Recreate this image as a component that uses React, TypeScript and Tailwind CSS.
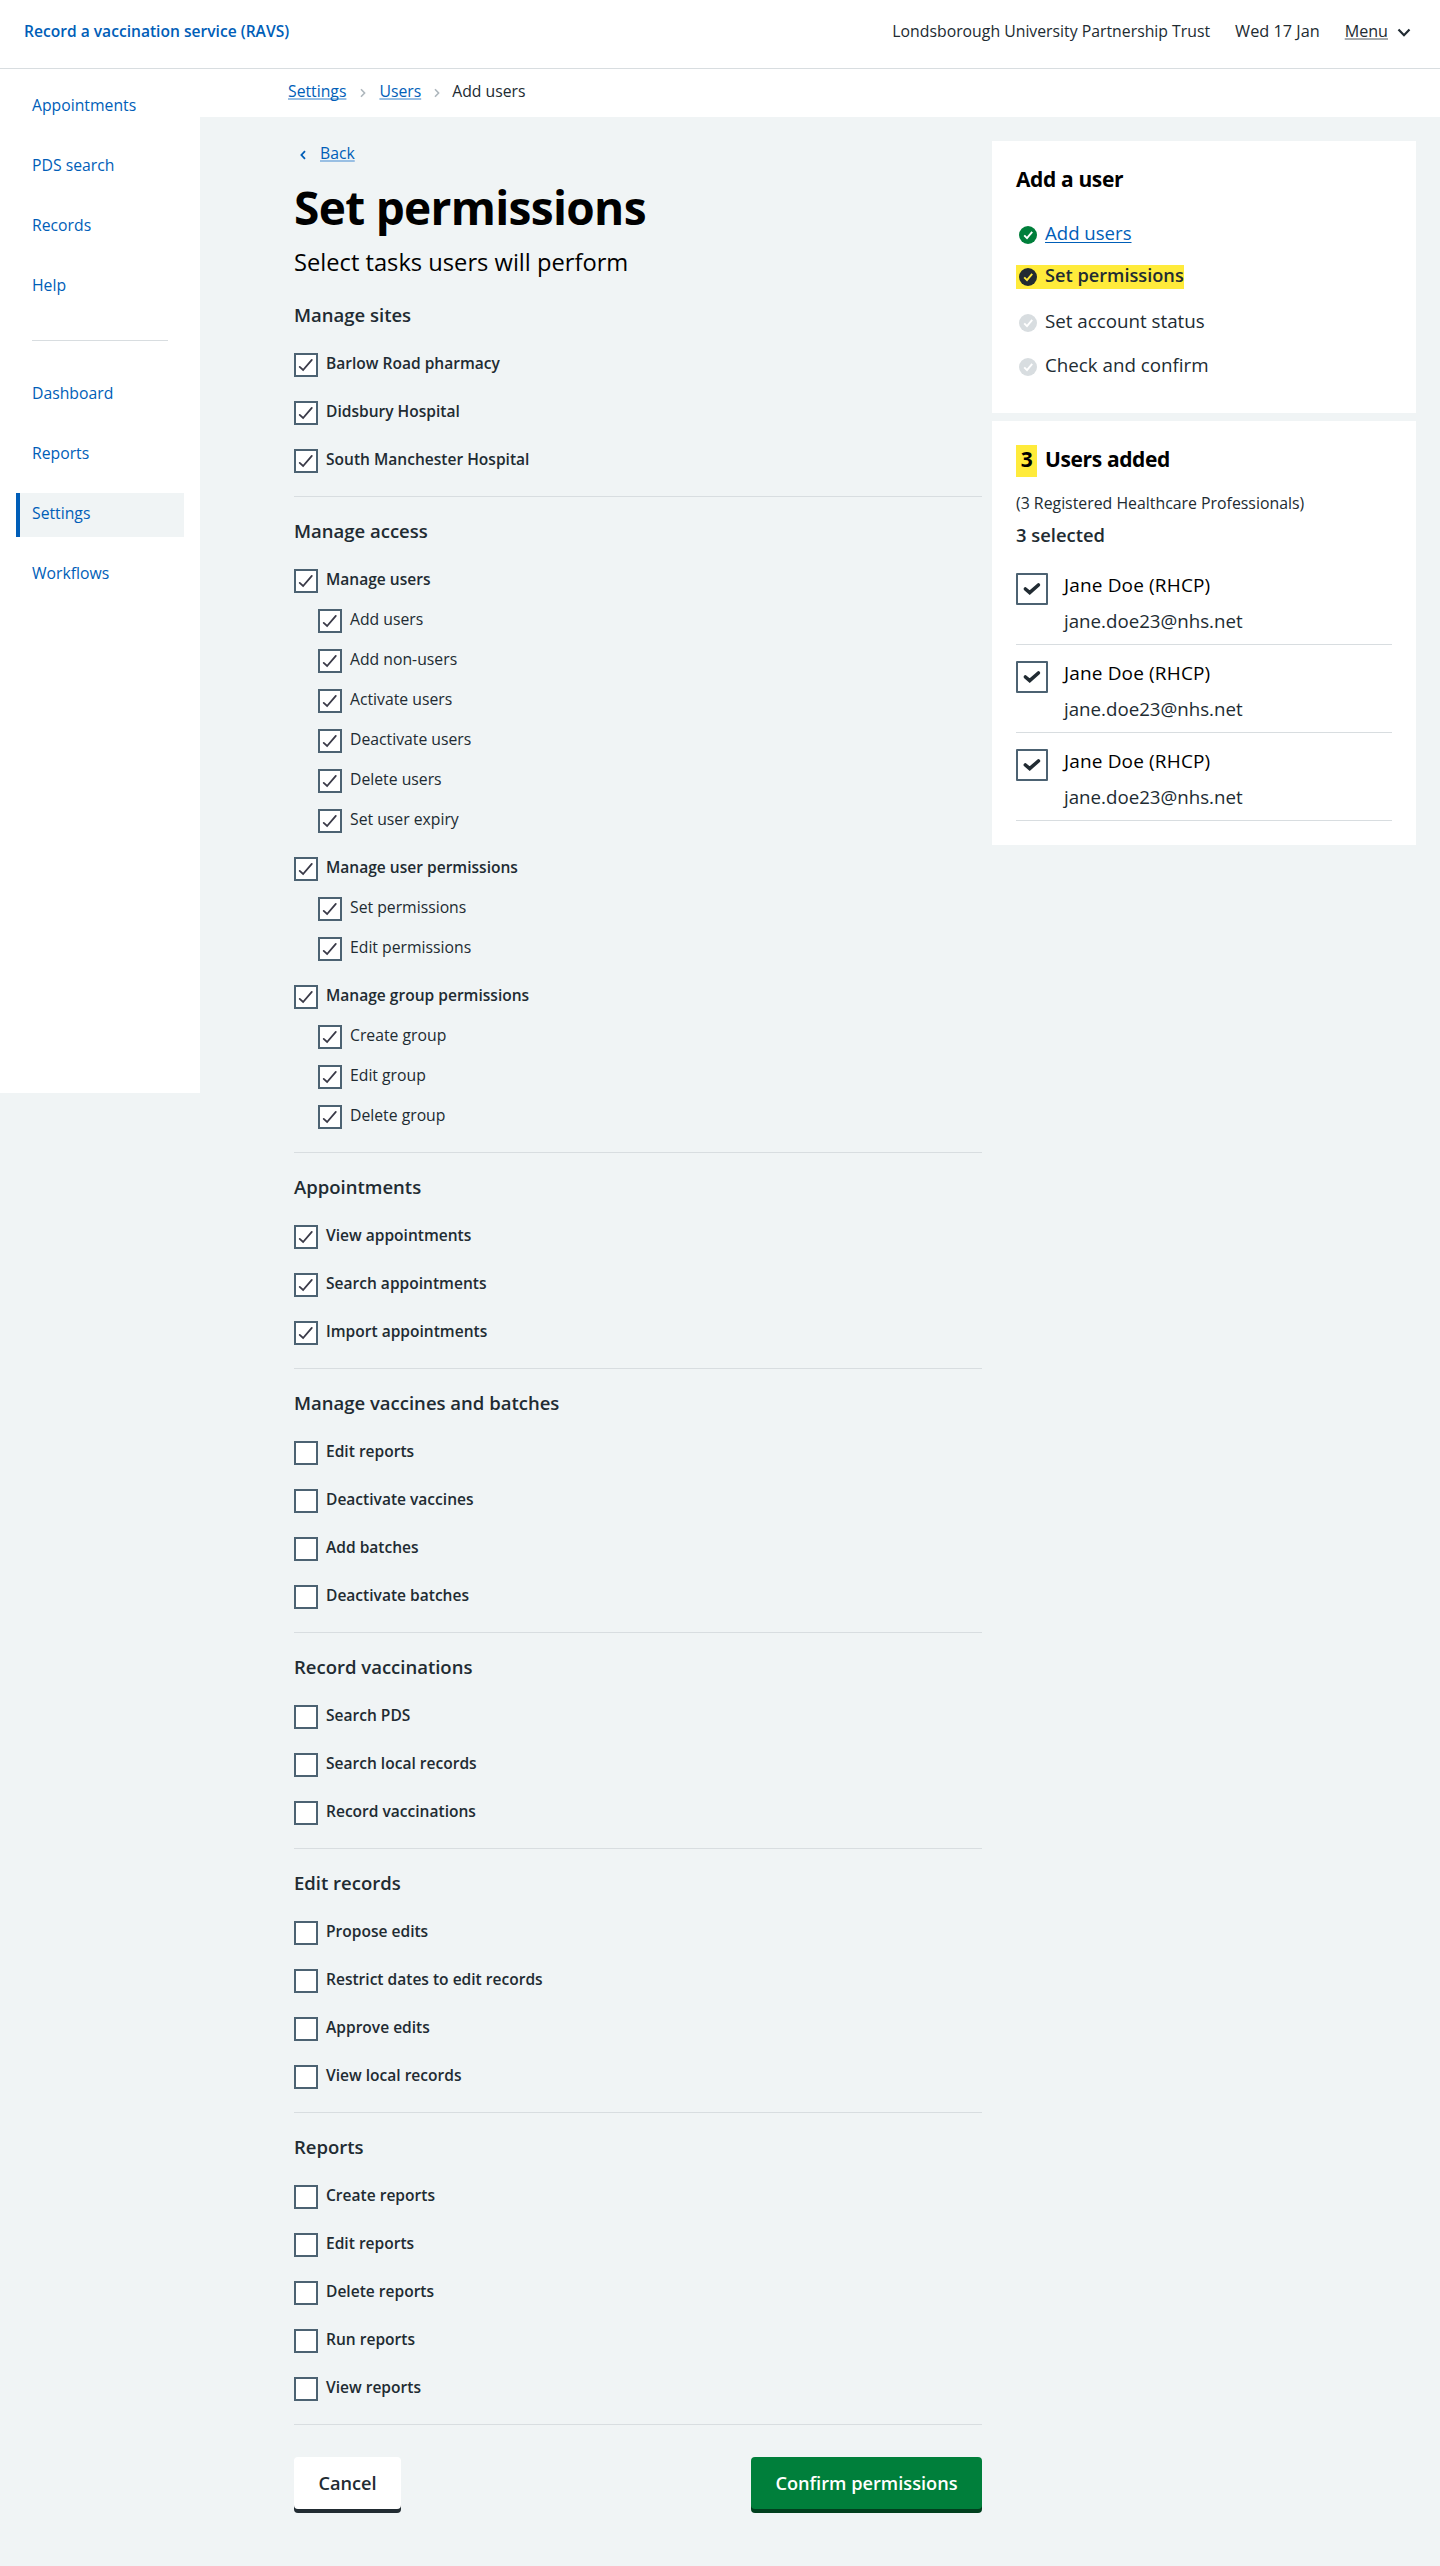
import type { ReactNode } from "react";

type Item = { label: string; children?: string[] };
type Section = { title: string; checked: boolean; items: Item[] };

const SECTIONS: Section[] = [
  {
    title: "Manage sites",
    checked: true,
    items: [{ label: "Barlow Road pharmacy" }, { label: "Didsbury Hospital" }, { label: "South Manchester Hospital" }],
  },
  {
    title: "Manage access",
    checked: true,
    items: [
      {
        label: "Manage users",
        children: ["Add users", "Add non-users", "Activate users", "Deactivate users", "Delete users", "Set user expiry"],
      },
      { label: "Manage user permissions", children: ["Set permissions", "Edit permissions"] },
      { label: "Manage group permissions", children: ["Create group", "Edit group", "Delete group"] },
    ],
  },
  {
    title: "Appointments",
    checked: true,
    items: [{ label: "View appointments" }, { label: "Search appointments" }, { label: "Import appointments" }],
  },
  {
    title: "Manage vaccines and batches",
    checked: false,
    items: [{ label: "Edit reports" }, { label: "Deactivate vaccines" }, { label: "Add batches" }, { label: "Deactivate batches" }],
  },
  {
    title: "Record vaccinations",
    checked: false,
    items: [{ label: "Search PDS" }, { label: "Search local records" }, { label: "Record vaccinations" }],
  },
  {
    title: "Edit records",
    checked: false,
    items: [
      { label: "Propose edits" },
      { label: "Restrict dates to edit records" },
      { label: "Approve edits" },
      { label: "View local records" },
    ],
  },
  {
    title: "Reports",
    checked: false,
    items: [
      { label: "Create reports" },
      { label: "Edit reports" },
      { label: "Delete reports" },
      { label: "Run reports" },
      { label: "View reports" },
    ],
  },
];

function Header() {
  return (
    <header className="flex h-[69px] justify-between border-b border-[#d8dde0] bg-white pt-[21px] pr-[29px] pl-6 text-[15.75px] leading-5">
      <a className="text-[15.6px] font-semibold text-[#005eb8]">Record a vaccination service (RAVS)</a>
      <div className="flex">
        <span className="mr-[25px] text-[15.8px]">Londsborough University Partnership Trust</span>
        <span className="mr-[25px] text-[16.3px]">Wed 17 Jan</span>
        <span className="mr-[9px] text-[16.1px] underline decoration-[#a6abae] decoration-2 underline-offset-1 [text-decoration-skip-ink:none]">
          Menu
        </span>
        <svg className="mt-[7px] h-[10px] w-[14px]" viewBox="0 0 14 10" fill="none" stroke="#212b32" strokeWidth="2.2">
          <path d="M1.5 1.5 7 7.2l5.5-5.7" />
        </svg>
      </div>
    </header>
  );
}

function NavItem({ children, active }: { children: ReactNode; active?: boolean }) {
  return (
    <a
      className={
        active
          ? "flex h-11 items-start border-l-4 border-[#005eb8] bg-[#f0f4f5] pt-[10px] pl-3"
          : "flex h-11 items-start pt-[10px] pl-4"
      }
    >
      {children}
    </a>
  );
}

function Sidebar() {
  return (
    <nav className="h-[1024px] w-[200px] shrink-0 bg-white px-4 pt-4 text-[15.75px] leading-5 text-[#005eb8]">
      <div className="flex flex-col gap-4">
        <NavItem>Appointments</NavItem>
        <NavItem>PDS search</NavItem>
        <NavItem>Records</NavItem>
        <NavItem>Help</NavItem>
      </div>
      <hr className="mx-4 mt-[31px] mb-8 border-[#d8dde0]" />
      <div className="flex flex-col gap-4">
        <NavItem>Dashboard</NavItem>
        <NavItem>Reports</NavItem>
        <NavItem active>Settings</NavItem>
        <NavItem>Workflows</NavItem>
      </div>
    </nav>
  );
}

function CrumbArrow({ className }: { className: string }) {
  return (
    <svg className={className} viewBox="0 0 6 10" fill="none" stroke="#aeb7bd" strokeWidth="1.6">
      <path d="M1 1.2 4.6 5 1 8.8" />
    </svg>
  );
}

const LINK =
  "text-[#005eb8] underline decoration-[#99bfe3] decoration-2 underline-offset-1 [text-decoration-skip-ink:none]";

function Breadcrumb() {
  return (
    <div className="flex h-12 bg-white pt-3 pl-[88px] text-[15.75px] leading-5">
      <a className={LINK}>Settings</a>
      <CrumbArrow className="mt-[7px] mr-[13px] ml-[14px] h-[10px] w-[6px]" />
      <a className={LINK}>Users</a>
      <CrumbArrow className="mt-[7px] mr-3 ml-[13px] h-[10px] w-[6px]" />
      <span>Add users</span>
    </div>
  );
}

function Checkbox({ checked }: { checked: boolean }) {
  return (
    <span className="flex size-6 shrink-0 border-2 border-[#4c6272] bg-white">
      {checked && (
        <svg className="size-5" viewBox="0 0 20 20" fill="none" stroke="#3a3a48" strokeWidth="1.8" strokeLinecap="round">
          <path d="M3.7 11.9 7.1 15 15.8 4.9" />
        </svg>
      )}
    </span>
  );
}

function PermissionSection({ title, checked, items }: Section) {
  return (
    <section className="border-b border-[#d8dde0] pb-[23px]">
      <h3 className="mb-6 text-[18.5px] leading-7 font-semibold">{title}</h3>
      <div className="flex flex-col gap-6">
        {items.map((item) => (
          <div key={item.label} className="flex flex-col gap-4">
            <label className="flex gap-2">
              <Checkbox checked={checked} />
              <span className="text-[15.55px] leading-[21px] font-semibold">{item.label}</span>
            </label>
            {item.children?.map((child) => (
              <label key={child} className="ml-6 flex gap-2">
                <Checkbox checked={checked} />
                <span className="text-[15.75px] leading-[21px]">{child}</span>
              </label>
            ))}
          </div>
        ))}
      </div>
    </section>
  );
}

function StepIcon({ fill, tick }: { fill: string; tick: string }) {
  return (
    <svg className="mr-[5px] size-6 shrink-0" viewBox="0 0 24 24" fill="none">
      <circle cx="12" cy="12" r="9" fill={fill} />
      <path d="M8.2 12.4 11 15.2 16.2 8.9" stroke={tick} strokeWidth="1.9" />
    </svg>
  );
}

function StepsCard() {
  return (
    <section className="h-[272px] bg-white px-6 pt-6">
      <h2 className="text-[21px] leading-7 font-bold tracking-[-0.018em] text-black">Add a user</h2>
      <div className="mt-[30px] flex flex-col items-start text-[18.75px] leading-5">
        <div className="flex h-6">
          <StepIcon fill="#007f3b" tick="#ffffff" />
          <a className="text-[18.6px] text-[#005eb8] underline decoration-1 underline-offset-2 [text-decoration-skip-ink:none]">
            Add users
          </a>
        </div>
        <div className="mt-[18px] flex h-6 bg-[#ffeb3b] text-[18.2px] font-semibold">
          <StepIcon fill="#212b32" tick="#ffeb3b" />
          <span>Set permissions</span>
        </div>
        <div className="mt-[22px] flex h-6">
          <StepIcon fill="#d8dde0" tick="#ffffff" />
          <span>Set account status</span>
        </div>
        <div className="mt-5 flex h-6">
          <StepIcon fill="#d8dde0" tick="#ffffff" />
          <span>Check and confirm</span>
        </div>
      </div>
    </section>
  );
}

function UserRow() {
  return (
    <div className="flex gap-4 border-b border-[#d8dde0] pb-[11px]">
      <span className="flex size-8 shrink-0 rounded-[1px] border-2 border-[#4c6272] bg-white">
        <svg className="size-7" viewBox="0 0 28 28" fill="none" stroke="#212b32" strokeWidth="3.6">
          <path d="M7.4 14 11.7 17.7 20.4 10" strokeLinecap="round" />
        </svg>
      </span>
      <div className="text-[18.7px] leading-6">
        <div className="text-[19px] tracking-[0.008em] text-black">Jane Doe (RHCP)</div>
        <div className="mt-3">jane.doe23@nhs.net</div>
      </div>
    </div>
  );
}

function UsersCard() {
  return (
    <section className="bg-white p-6">
      <h2 className="flex h-8 text-[21px] leading-7 font-bold tracking-[-0.018em] text-black">
        <span className="mr-2 w-[21px] bg-[#ffeb3b] text-center">3</span>
        Users added
      </h2>
      <p className="mt-4 text-[15.85px] leading-5">(3 Registered Healthcare Professionals)</p>
      <p className="mt-3 mb-7 text-[18.4px] leading-5 font-semibold">3 selected</p>
      <div className="flex flex-col gap-4">
        <UserRow />
        <UserRow />
        <UserRow />
      </div>
    </section>
  );
}

export default function App() {
  return (
    <div className="min-h-[2566px] bg-[#f0f4f5] font-['Open_Sans',sans-serif] text-[#212b32]">
      <Header />
      <div className="flex items-start">
        <Sidebar />
        <div className="flex-1">
          <Breadcrumb />
          <div className="flex items-start pr-6 pl-[94px]">
            <main className="w-[688px] pt-[26px]">
              <div className="flex pl-1.5 text-[15.75px] leading-5">
                <svg className="mt-[7px] mr-[14px] h-[10px] w-[6px]" viewBox="0 0 6 10" fill="none" stroke="#005eb8" strokeWidth="1.8">
                  <path d="M5 1.2 1.4 5 5 8.8" />
                </svg>
                <a className={LINK}>Back</a>
              </div>
              <h1 className="mt-4 text-[46px] leading-[56px] font-bold tracking-[-0.015em] text-black">Set permissions</h1>
              <p className="mt-[11px] mb-[23px] text-[23.7px] leading-8 text-black">Select tasks users will perform</p>
              <div className="flex flex-col gap-5">
                {SECTIONS.map((section) => (
                  <PermissionSection key={section.title} {...section} />
                ))}
              </div>
              <div className="mt-8 flex justify-between text-[18.2px] leading-6 font-semibold">
                <button className="h-[52px] w-[107px] rounded-sm bg-white shadow-[0_4px_0_0_#212b32]">Cancel</button>
                <button className="h-[52px] w-[231px] rounded-sm bg-[#007f3b] text-white shadow-[0_4px_0_0_#00401e]">
                  Confirm permissions
                </button>
              </div>
            </main>
            <aside className="mt-6 ml-auto flex w-[424px] flex-col gap-2">
              <StepsCard />
              <UsersCard />
            </aside>
          </div>
        </div>
      </div>
    </div>
  );
}
